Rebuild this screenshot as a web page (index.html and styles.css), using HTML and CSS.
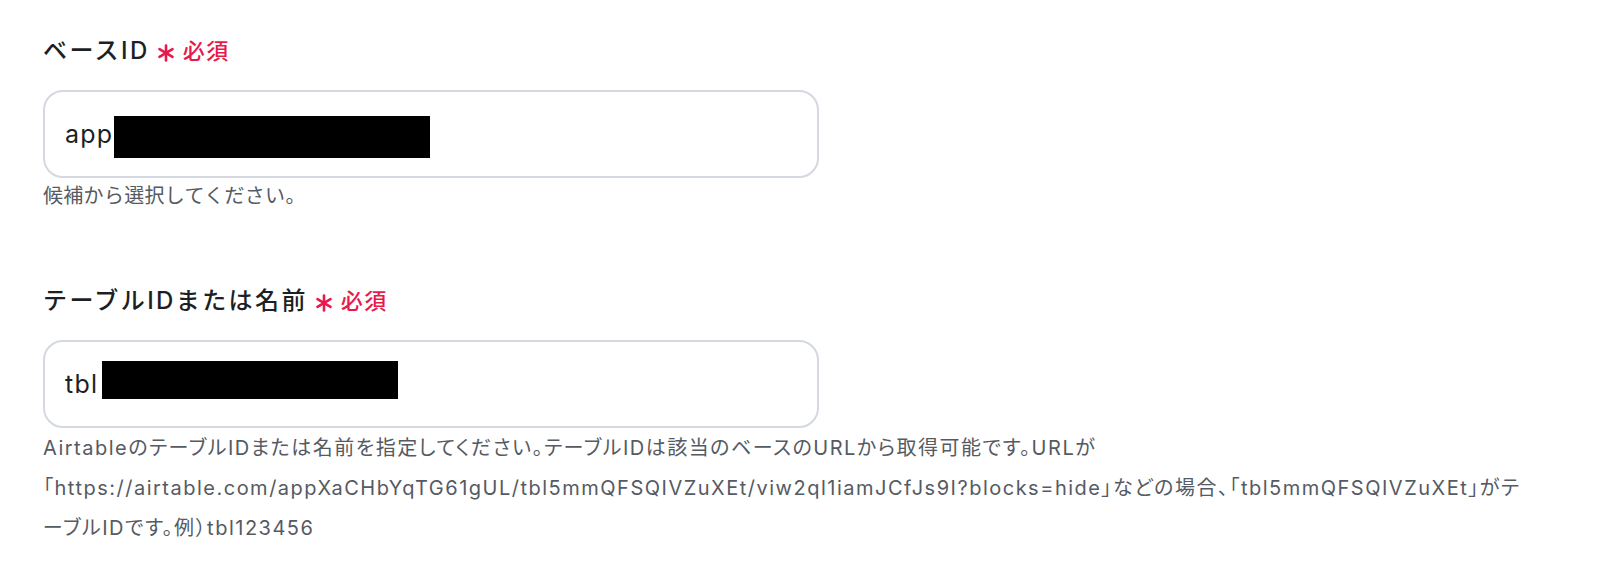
FILE: index.html
```html
<!DOCTYPE html>
<html lang="ja">
<head>
<meta charset="utf-8">
<title>Airtable設定</title>
<link rel="stylesheet" href="styles.css">
</head>
<body>
<div class="form">
  <div class="field">
    <div class="label">
      <span class="label-text">ベースID</span>
      <svg class="req-mark" viewBox="0 0 16 18" width="16" height="18" aria-hidden="true">
        <g stroke="#e8194b" stroke-width="2.6" stroke-linecap="round">
          <line x1="8" y1="1.5" x2="8" y2="16.5"/>
          <line x1="1.5" y1="5.2" x2="14.5" y2="12.8"/>
          <line x1="1.5" y1="12.8" x2="14.5" y2="5.2"/>
        </g>
      </svg>
      <span class="req-text">必須</span>
    </div>
    <div class="input">
      <span class="value">app</span><span class="redact redact-base"></span>
    </div>
    <div class="hint">候補から選択してください。</div>
  </div>

  <div class="field">
    <div class="label">
      <span class="label-text">テーブルIDまたは名前</span>
      <svg class="req-mark" viewBox="0 0 16 18" width="16" height="18" aria-hidden="true">
        <g stroke="#e8194b" stroke-width="2.6" stroke-linecap="round">
          <line x1="8" y1="1.5" x2="8" y2="16.5"/>
          <line x1="1.5" y1="5.2" x2="14.5" y2="12.8"/>
          <line x1="1.5" y1="12.8" x2="14.5" y2="5.2"/>
        </g>
      </svg>
      <span class="req-text">必須</span>
    </div>
    <div class="input">
      <span class="value">tbl</span><span class="redact redact-table"></span>
    </div>
    <div class="help">AirtableのテーブルIDまたは名前を指定してください。テーブルIDは該当のベースのURLから取得可能です。URLが「https://airtable.com/appXaCHbYqTG61gUL/tbl5mmQFSQIVZuXEt/viw2ql1iamJCfJs9I?blocks=hide」などの場合、「tbl5mmQFSQIVZuXEt」がテーブルIDです。例）tbl123456</div>
  </div>
</div>
</body>
</html>
```

FILE: styles.css
```css
html, body {
  margin: 0;
  padding: 0;
  background: #ffffff;
}

body {
  font-family: Inter, "Noto Sans CJK JP", "Noto Sans", sans-serif;
  color: #1c1f25;
}

.form {
  padding: 35px 0 0 43px;
  display: flex;
  flex-direction: column;
  gap: 71px;
}

.field {
  display: flex;
  flex-direction: column;
}

.label {
  display: flex;
  align-items: center;
  height: 32px;
  margin-bottom: 23px;
}

.label-text {
  font-size: 24px;
  font-weight: 500;
  line-height: 32px;
  letter-spacing: 2.4px;
  color: #1c1f25;
}

.req-mark {
  margin-left: 8px;
  margin-top: 4px;
}

.req-text {
  margin-left: 9px;
  font-size: 22px;
  font-weight: 500;
  line-height: 32px;
  letter-spacing: 1.5px;
  color: #e8194b;
}

.input {
  box-sizing: border-box;
  width: 776px;
  height: 88px;
  border: 2px solid #d4d8e1;
  border-radius: 20px;
  display: flex;
  align-items: center;
  padding-left: 20px;
}

.value {
  font-size: 25px;
  letter-spacing: 1.2px;
  color: #1c1f25;
}

.redact {
  display: block;
  background: #000000;
}

.redact-base {
  width: 316px;
  height: 42px;
  margin-left: 1px;
  margin-top: 6px;
}

.redact-table {
  width: 296px;
  height: 38px;
  margin-left: 4px;
  margin-bottom: 8px;
}

.hint {
  font-size: 20px;
  line-height: 36px;
  letter-spacing: 0.3px;
  color: #555a63;
}

.help {
  width: 1490px;
  font-size: 20px;
  line-height: 40px;
  letter-spacing: 1.5px;
  font-feature-settings: "palt";
  color: #555a63;
}
```
